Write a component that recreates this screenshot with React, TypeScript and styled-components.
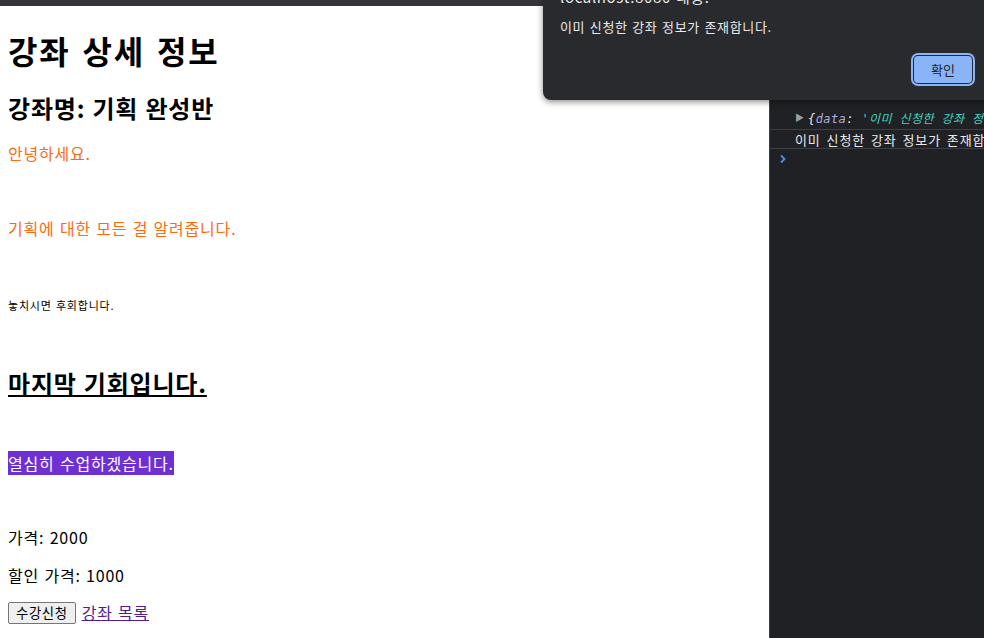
import React from 'react';
import styled, { createGlobalStyle } from 'styled-components';

const GlobalStyle = createGlobalStyle`
body {
  margin: 0;
  overflow: hidden;
  background: #ffffff;
}
`;

const Window = styled.div`
position: relative;
width: 984px;
height: 638px;
overflow: hidden;
display: flex;
flex-direction: column;
font-family: "Noto Sans CJK KR", "Noto Sans", sans-serif;
`;

const TopBar = styled.div`
height: 6px;
background: #35363a;
flex-shrink: 0;
`;

const Main = styled.div`
flex: 1;
display: flex;
min-height: 0;
`;

const Page = styled.div`
width: 769px;
flex-shrink: 0;
padding: 0 8px;
box-sizing: border-box;
color: #000000;
line-height: 1.333;
letter-spacing: 0.05em;
word-spacing: 0.06em;
`;

const Title = styled.h1`
font-size: 32px;
font-weight: bold;
margin: 22.5px 0 20.4px;
letter-spacing: 0.06em;
word-spacing: 0.08em;
`;

const CourseName = styled.h2`
font-size: 24px;
font-weight: bold;
margin: 19.92px 0;
`;

const Paragraph = styled.p<{ $color?: string }>`
font-size: 16px;
margin: 16px 0;
color: ${(p) => p.$color || '#000000'};
`;

const SmallText = styled.span`
font-size: 11px;
`;

const LargeText = styled.span`
font-size: 24px;
font-weight: bold;
text-decoration: underline;
`;

const Highlight = styled.span`
background: #6e30d2;
color: #ffffff;
`;

const Actions = styled.div`
display: flex;
align-items: center;
gap: 6px;
font-size: 16px;
`;

const EnrollButton = styled.button`
font-family: "Noto Sans CJK KR", sans-serif;
font-size: 13.33px;
line-height: 18px;
letter-spacing: 0.05em;
padding: 1px 7px;
background: #efefef;
color: #000000;
border: 1px solid #767676;
border-radius: 2px;
`;

const ListLink = styled.a`
color: #551a8b;
text-decoration: underline;
cursor: pointer;
`;

const DevTools = styled.div`
flex: 1;
background: #202124;
border-left: 1px solid #3c4043;
padding-top: 100px;
font-size: 13px;
color: #e8eaed;
`;

const ConsoleRow = styled.div<{ $height: number }>`
height: ${(p) => p.$height}px;
display: flex;
align-items: center;
gap: 4px;
padding-left: 25px;
white-space: nowrap;
overflow: hidden;
border-bottom: 1px solid #3c3f43;
`;

const PromptRow = styled.div`
height: 20px;
display: flex;
align-items: center;
padding-left: 9px;
color: #4b8cf5;
`;

const Caret = styled.span`
font-size: 9px;
color: #9aa0a6;
`;

const Preview = styled.span`
font-style: italic;
font-family: "DejaVu Sans Mono", "Noto Sans CJK KR", monospace;
font-size: 12px;
letter-spacing: 0.4px;
`;

const PropName = styled.span`
color: #b0aedc;
`;

const StringValue = styled.span`
color: #46d4c4;
`;

const LogText = styled.span`
font-size: 13px;
letter-spacing: 0.9px;
word-spacing: 2px;
`;

const Dialog = styled.div`
position: absolute;
left: 543px;
top: -33px;
width: 448px;
box-sizing: border-box;
padding: 20px 16px 14px 17px;
background: #292a2d;
border-radius: 0 0 8px 8px;
box-shadow: 0 2px 6px rgba(0, 0, 0, 0.45);
color: #e8eaed;
font-size: 13px;
letter-spacing: 0.05em;
word-spacing: 0.08em;
`;

const DialogTitle = styled.div`
font-size: 15px;
line-height: 20px;
`;

const DialogMessage = styled.div`
margin-top: 11px;
line-height: 18px;
`;

const DialogFooter = styled.div`
margin-top: 17px;
display: flex;
justify-content: flex-end;
padding: 3px;
`;

const ConfirmButton = styled.button`
width: 58px;
height: 27px;
border: none;
border-radius: 4px;
background: #8ab4f8;
color: #202124;
font-family: "Noto Sans CJK KR", sans-serif;
font-size: 13px;
box-shadow: 0 0 0 1px #292a2d, 0 0 0 3px #8ab4f8;
`;

const ChevronIcon: React.FC = () => (
  <svg width="8" height="10" viewBox="0 0 8 10">
    <path d="M2 1.5 L5.5 5 L2 8.5" fill="none" stroke="currentColor" strokeWidth="1.8" />
  </svg>
);

const App: React.FC = () => {
  return (
    <Window>
      <GlobalStyle />
      <TopBar />
      <Main>
        <Page>
          <Title>강좌 상세 정보</Title>
          <CourseName>강좌명: 기획 완성반</CourseName>
          <Paragraph $color="#ff6a10">안녕하세요.</Paragraph>
          <Paragraph><br /></Paragraph>
          <Paragraph $color="#ff6a10">기획에 대한 모든 걸 알려줍니다.</Paragraph>
          <Paragraph><br /></Paragraph>
          <Paragraph><SmallText>놓치시면 후회합니다.</SmallText></Paragraph>
          <Paragraph><br /></Paragraph>
          <Paragraph><LargeText>마지막 기회입니다.</LargeText></Paragraph>
          <Paragraph><br /></Paragraph>
          <Paragraph><Highlight>열심히 수업하겠습니다.</Highlight></Paragraph>
          <Paragraph><br /></Paragraph>
          <Paragraph>가격: 2000</Paragraph>
          <Paragraph>할인 가격: 1000</Paragraph>
          <Actions>
            <EnrollButton>수강신청</EnrollButton>
            <ListLink>강좌 목록</ListLink>
          </Actions>
        </Page>
        <DevTools>
          <ConsoleRow $height={23}>
            <Caret>▶</Caret>
            <Preview>
              {'{'}<PropName>data</PropName>: <StringValue>'이미 신청한 강좌 정보가 존재합니다.'</StringValue>{'}'}
            </Preview>
          </ConsoleRow>
          <ConsoleRow $height={18}>
            <LogText>이미 신청한 강좌 정보가 존재합니다.</LogText>
          </ConsoleRow>
          <PromptRow><ChevronIcon /></PromptRow>
        </DevTools>
      </Main>
      <Dialog>
        <DialogTitle>localhost:8080 내용:</DialogTitle>
        <DialogMessage>이미 신청한 강좌 정보가 존재합니다.</DialogMessage>
        <DialogFooter>
          <ConfirmButton>확인</ConfirmButton>
        </DialogFooter>
      </Dialog>
    </Window>
  );
};

export default App;
